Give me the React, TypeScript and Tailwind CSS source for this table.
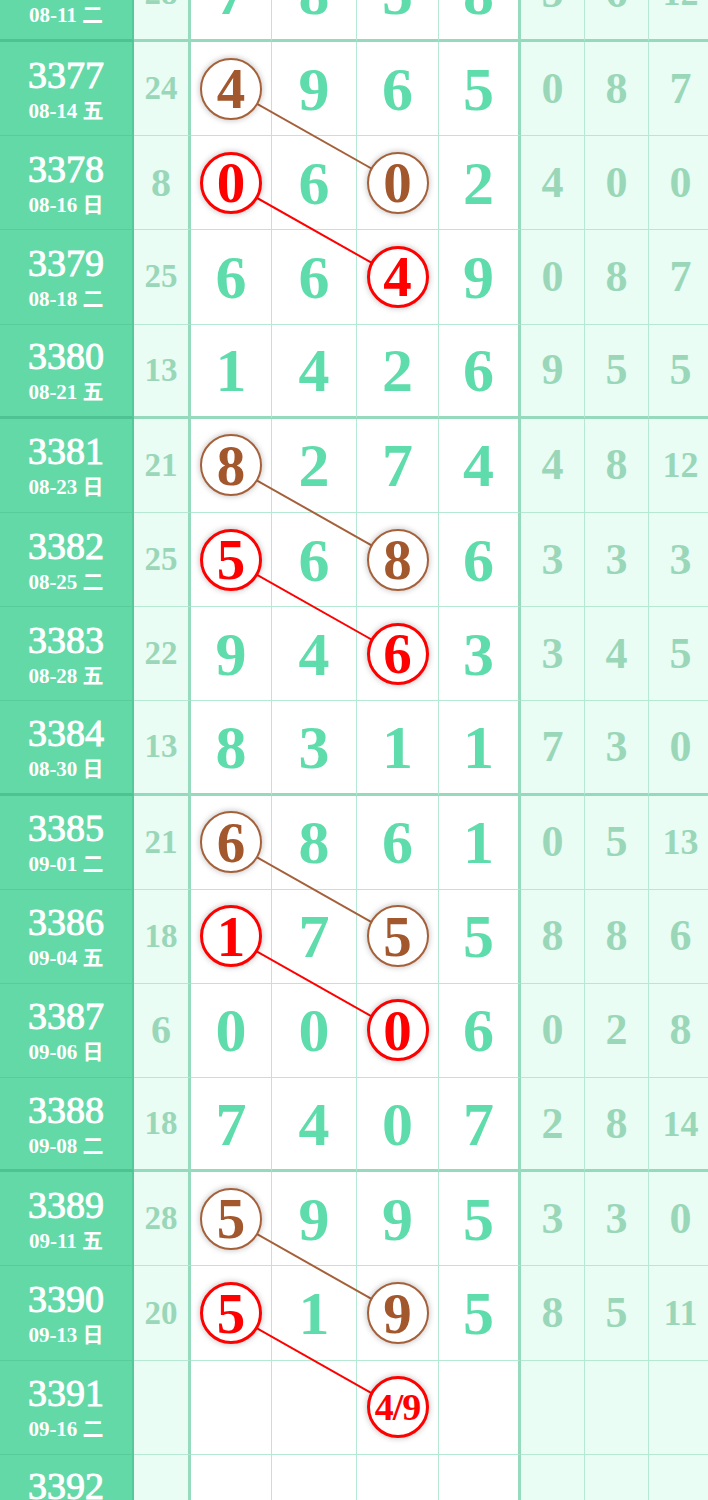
type Mark = "brown" | "red";

type Row = {
  issue: number;
  date: string;
  sum?: number;
  nums: (number | string | null)[];
  right: (number | null)[];
  marks?: { [col: number]: Mark };
};

const ROW_H = 94.2;
// centre x of number columns 1 and 3
const C1_X = 231.5;
const C3_X = 398;

const rows: Row[] = [
  { issue: 3376, date: "08-11 二", sum: 28, nums: [7, 8, 5, 8], right: [5, 6, 12] },
  { issue: 3377, date: "08-14 五", sum: 24, nums: [4, 9, 6, 5], right: [0, 8, 7], marks: { 0: "brown" } },
  { issue: 3378, date: "08-16 日", sum: 8, nums: [0, 6, 0, 2], right: [4, 0, 0], marks: { 0: "red", 2: "brown" } },
  { issue: 3379, date: "08-18 二", sum: 25, nums: [6, 6, 4, 9], right: [0, 8, 7], marks: { 2: "red" } },
  { issue: 3380, date: "08-21 五", sum: 13, nums: [1, 4, 2, 6], right: [9, 5, 5] },
  { issue: 3381, date: "08-23 日", sum: 21, nums: [8, 2, 7, 4], right: [4, 8, 12], marks: { 0: "brown" } },
  { issue: 3382, date: "08-25 二", sum: 25, nums: [5, 6, 8, 6], right: [3, 3, 3], marks: { 0: "red", 2: "brown" } },
  { issue: 3383, date: "08-28 五", sum: 22, nums: [9, 4, 6, 3], right: [3, 4, 5], marks: { 2: "red" } },
  { issue: 3384, date: "08-30 日", sum: 13, nums: [8, 3, 1, 1], right: [7, 3, 0] },
  { issue: 3385, date: "09-01 二", sum: 21, nums: [6, 8, 6, 1], right: [0, 5, 13], marks: { 0: "brown" } },
  { issue: 3386, date: "09-04 五", sum: 18, nums: [1, 7, 5, 5], right: [8, 8, 6], marks: { 0: "red", 2: "brown" } },
  { issue: 3387, date: "09-06 日", sum: 6, nums: [0, 0, 0, 6], right: [0, 2, 8], marks: { 2: "red" } },
  { issue: 3388, date: "09-08 二", sum: 18, nums: [7, 4, 0, 7], right: [2, 8, 14] },
  { issue: 3389, date: "09-11 五", sum: 28, nums: [5, 9, 9, 5], right: [3, 3, 0], marks: { 0: "brown" } },
  { issue: 3390, date: "09-13 日", sum: 20, nums: [5, 1, 9, 5], right: [8, 5, 11], marks: { 0: "red", 2: "brown" } },
  { issue: 3391, date: "09-16 二", nums: [null, null, "4/9", null], right: [null, null, null], marks: { 2: "red" } },
  { issue: 3392, date: "09-18 五", nums: [null, null, null, null], right: [null, null, null] },
];

// each brown / red pair runs from column 1 of one row to column 3 of the next
const links: { from: number; to: number; color: Mark }[] = [];
rows.forEach((r, i) => {
  if (r.marks?.[0] && rows[i + 1]?.marks?.[2]) {
    links.push({ from: i, to: i + 1, color: r.marks[0] });
  }
});

const numWidths = ["w-[81px]", "w-[85px]", "w-[82px]", "w-[82px]"];

function Circle({ value, color }: { value: number | string; color: Mark }) {
  const small = String(value).length > 1;
  return (
    <span
      className={`relative z-10 flex h-[62px] w-[62px] items-center justify-center rounded-full bg-white font-bold leading-none shadow-[0_0_6px_rgba(0,0,0,0.28)] ${
        color === "red"
          ? "border-[3px] border-[#ff0000] text-[#ff0000]"
          : "border-[2.5px] border-[#a5603a] text-[#a3572c]"
      } ${small ? "text-[38px] tracking-[-1px]" : "text-[57px]"}`}
    >
      {value}
    </span>
  );
}

function GridRow({ row }: { row: Row }) {
  const thick = row.issue % 4 === 0;
  const lineB = thick
    ? "border-b-[3px] border-b-[#95dabd]"
    : "border-b border-b-[#b6e9d3]";
  const leftLine = thick
    ? "border-b-[3px] border-b-[#4fc293]"
    : "border-b border-b-[#58cc9c]";

  return (
    <div className="flex h-[94.2px]">
      <div
        className={`flex w-[134px] shrink-0 flex-col items-center justify-center border-r-2 border-r-[#55c89a] bg-[#64d9a8] text-white ${leftLine}`}
      >
        <span className="text-[38px] leading-[38px] [-webkit-text-stroke:1px_white]">
          {row.issue}
        </span>
        <span className="mt-[6px] text-[21px] font-bold leading-[22px]">
          {row.date}
        </span>
      </div>

      <div
        className={`flex w-[57px] shrink-0 items-center justify-center border-r-[3px] border-r-[#97dbbf] bg-[#e9fdf4] font-bold leading-none text-[#9ad7b9] ${lineB} ${
          row.sum !== undefined && row.sum > 9 ? "text-[33px]" : "text-[40px]"
        }`}
      >
        {row.sum ?? ""}
      </div>

      {row.nums.map((n, i) => (
        <div
          key={i}
          className={`flex shrink-0 items-center justify-center bg-white text-[62px] font-bold leading-none text-[#5edcab] ${numWidths[i]} ${
            i === 3
              ? "border-r-[3px] border-r-[#97dbbf]"
              : "border-r border-r-[#b6e9d3]"
          } ${lineB}`}
        >
          {n === null ? "" : row.marks?.[i] ? (
            <Circle value={n} color={row.marks[i]} />
          ) : (
            n
          )}
        </div>
      ))}

      {row.right.map((n, i) => (
        <div
          key={i}
          className={`flex w-[64px] shrink-0 items-center justify-center border-r border-r-[#b6e9d3] bg-[#e9fdf4] font-bold leading-none text-[#9ad7b9] ${lineB} ${
            n !== null && n > 9 ? "text-[36px]" : "text-[44px]"
          }`}
        >
          {n ?? ""}
        </div>
      ))}
    </div>
  );
}

export default function App() {
  const height = rows.length * ROW_H;

  return (
    <div className="h-[1500px] w-[708px] overflow-hidden bg-white font-['Liberation_Serif','Noto_Sans_CJK_SC',serif]">
      <div className="relative -mt-[52.2px] w-[713px]">
        {rows.map((r) => (
          <GridRow key={r.issue} row={r} />
        ))}

        <svg
          className="pointer-events-none absolute left-0 top-0 z-[1]"
          width={713}
          height={height}
          viewBox={`0 0 713 ${height}`}
        >
          {links.map((l, i) => (
            <line
              key={i}
              x1={C1_X}
              y1={l.from * ROW_H + ROW_H / 2}
              x2={C3_X}
              y2={l.to * ROW_H + ROW_H / 2}
              stroke={l.color === "red" ? "#ff0000" : "#a5603a"}
              strokeWidth={2}
            />
          ))}
        </svg>
      </div>
    </div>
  );
}
